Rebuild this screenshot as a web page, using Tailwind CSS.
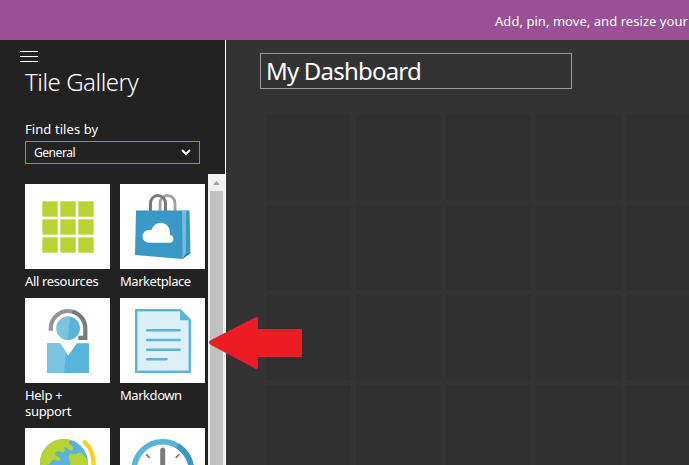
<!DOCTYPE html>
<html lang="en"><head><meta charset="utf-8"><title>Tile Gallery</title>
<script src="https://cdn.jsdelivr.net/npm/@tailwindcss/browser@4"></script></head>
<body class="relative flex h-[465px] w-[689px] flex-col overflow-hidden bg-[#333] font-['Noto_Sans','Open_Sans',sans-serif] text-white">
<header class="flex h-10 shrink-0 items-center bg-[#9b4f96] pt-[3px] pl-[495px] text-[13px] whitespace-nowrap"><span class="tracking-[0.05px]">Add, pin, move, and resize your tiles</span></header>
<div class="flex min-h-0 flex-1">
<aside class="flex w-[226px] shrink-0 flex-col border-r border-white bg-[#222]">
  <div class="h-[134px] shrink-0 pt-[11px] pl-[25px]">
    <div class="-ml-[5px] flex w-[18px] flex-col gap-1"><i class="h-px bg-white"></i><i class="h-px bg-white"></i><i class="h-px bg-white"></i></div>
    <h1 class="mt-[3px] h-[34px] text-[24px] leading-[34px] font-light tracking-[-0.45px] whitespace-nowrap">Tile Gallery</h1>
    <p class="mt-[20px] h-[20px] text-[13px] leading-[20px] tracking-[0.08px]">Find tiles by</p>
    <div class="mt-[2px] flex h-[23px] w-[175px] items-center justify-between border border-[#1bb1e7] pr-[8px] pl-2 text-[12px]"><span class="tracking-[-0.45px]">General</span>
      <svg class="h-[7px] w-[10px]" viewBox="0 0 10 7" fill="none" stroke="#fff" stroke-width="2"><path d="M1 1L5 5L9 1"/></svg></div>
  </div>
  <div class="flex min-h-0 flex-1 overflow-hidden">
    <div class="grid w-[208px] shrink-0 grid-cols-[85px_85px] content-start gap-x-[10px] pt-[10px] pl-[25px] text-[13px] leading-4">
      <div class="h-[114px]"><div class="size-[85px] bg-white"><svg viewBox="0 0 85 85" fill="#b8d432" stroke="#cfe274" stroke-width="1">
        <path d="M17.5 17.5h15v15h-15zM35.5 17.5h15v15h-15zM53.5 17.5h15v15h-15zM17.5 35.5h15v15h-15zM35.5 35.5h15v15h-15zM53.5 35.5h15v15h-15zM17.5 53.5h15v15h-15zM35.5 53.5h15v15h-15zM53.5 53.5h15v15h-15z"/></svg></div><p class="mt-[4px] whitespace-nowrap"><span class="tracking-[-0.35px]">All resources</span></p></div>
      <div class="h-[114px]"><div class="size-[85px] bg-white"><svg viewBox="0 0 85 85">
        <path d="M40 27V19a7.500 7.500 0 0 1 15 0V27" fill="none" stroke="#a0a1a2" stroke-width="2.800"/>
        <path d="M30.500 27V19a7.500 7.500 0 0 1 15 0V27" fill="none" stroke="#7a7a7a" stroke-width="3"/>
        <path d="M16 26.500H69.500L70.500 69L62.500 75L15 71Z" fill="#3999c6"/><path d="M62 26.500H66V72L62.500 75Z" fill="#7bb9d9"/><path d="M62.500 75L66 69L70.500 69Z" fill="#2b7fa8"/>
        <path d="M28.800 58.700a6.400 6.400 0 0 1 .2-12.800c.9 0 1.600.1 2.300.4C33 41.600 36.300 38.700 40.500 38.700c5.300 0 9.500 4.300 9.500 9.500 0 1-.1 2-.4 2.900 2.200 0 3.900 1.700 3.900 3.800 0 2.200-1.700 3.800-3.800 3.800z" fill="#fff"/></svg></div><p class="mt-[4px] whitespace-nowrap"><span class="tracking-[-0.45px]">Marketplace</span></p></div>
      <div class="h-[130px]"><div class="size-[85px] bg-white"><svg viewBox="0 0 85 85">
        <path d="M25.800 32.700V30.300A17.250 17.250 0 0 1 47 13.500" fill="none" stroke="#959595" stroke-width="4.200"/><path d="M47 13.500A17.250 17.250 0 0 1 60.300 30.300V39.900H53.300" fill="none" stroke="#7a7a7a" stroke-width="4.200"/>
        <circle cx="43.300" cy="30.300" r="11.700" fill="#59b4d9"/><path d="M45 18.800A11.700 11.700 0 1 0 42.500 42Z" fill="#7ac3e1"/>
        <path d="M22 45.300H35L43.300 57.500L51.700 45.300H64V75H22Z" fill="#59b4d9"/><path d="M22 45.300H35L41.200 54.500L39 75H22Z" fill="#7ac3e1"/></svg></div><p class="mt-[4px] tracking-[-0.3px]">Help + support</p></div>
      <div class="h-[130px]"><div class="size-[85px] bg-white"><svg viewBox="0 0 85 85">
        <path d="M16 12H60L70 22.500V74H16Z" fill="#ddeff7" stroke="#59b4d9" stroke-width="2"/><path d="M17.500 13.500H59M17.500 13V72.500H68.500V23" fill="none" stroke="#a5d5e9"/><path d="M60 11L71 22.300H60Z" fill="#59b4d9"/>
        <path d="M27.200 32.300H59.500M27.200 42H59.500M27.200 51.700H59.500M27.200 61.300H46.500" stroke="#59b4d9" stroke-width="2.600" stroke-linecap="round"/></svg></div><p class="mt-[4px]"><span class="tracking-[-0.45px]">Markdown</span></p></div>
      <div class="size-[85px] bg-white"><svg viewBox="0 0 85 85">
        <circle cx="39" cy="35" r="24" fill="#59b4d9"/>
        <path d="M15 35A24 24 0 0 1 40 11c2 0 4 .5 5.500 1.200c-1.500 1.300-2 2.800-1 4c.8 1 2 .8 2.800 2c2.500 3-.8 5.500-3.500 3.200c-2-1.800-3.500-2.200-5.500-2.200c2.500 2 2.200 5-.6 5.200c-2 .1-2-1.300-3.800-1.300c-2.600 0-4.400 1.800-3.400 4c.8 1.600 4 1 4.500 3.500c.4 2.400-2 2.500-3.500 1.600c-3-1.700-5-.2-7 4L15.500 38z" fill="#b8d432"/>
        <path d="M43.500 29c0-3 2.500-4 5-3c1.700.7 2.700.3 4-.7c2-1.500 4.500-.6 6 2C60 29 63 31 63 38H44.500c2-3-.7-5.500-1-9z" fill="#b8d432"/>
        <path d="M59.700 14.300Q69 22 68.700 39" fill="none" stroke="#fcd116" stroke-width="4.300" stroke-linecap="round"/></svg></div>
      <div class="size-[85px] bg-white"><svg viewBox="0 0 85 85" fill="none">
        <circle cx="42.700" cy="42.500" r="28.700" stroke="#59b4d9" stroke-width="5.500"/><path d="M57.500 17.900A28.700 28.700 0 0 1 71.400 42.500" stroke="#3999c6" stroke-width="5.500"/>
        <path d="M42.700 22V45" stroke="#7a7a7a" stroke-width="5" stroke-linecap="round"/><path d="M26.200 26.300l3.500 3.500M59.200 26.300l-3.500 3.500" stroke="#7a7a7a" stroke-width="1.800"/></svg></div>
    </div>
    <div class="flex w-[17px] shrink-0 flex-col items-center bg-[#f1f1f1]"><div class="flex h-[17px] w-full items-center justify-center"><svg class="h-1 w-[7px]" viewBox="0 0 7 4" fill="#a3a3a3"><path d="M0 4L3.500 0L7 4z"/></svg></div><div class="w-[13px] flex-1 bg-[#c1c1c1]"></div></div>
  </div>
</aside>
<main class="min-w-0 flex-1 overflow-hidden pt-[13px] pl-[34px]">
  <div class="flex h-9 w-[312px] items-center border border-[#999] pl-[5px] text-[24px]"><span class="tracking-[-0.8px]">My Dashboard</span></div>
  <div class="mt-[26px] ml-[6px] grid w-[445px] grid-cols-5 gap-[5px] *:h-[85px] *:bg-[#2f2f2f]">
    <i></i><i></i><i></i><i></i><i></i><i></i><i></i><i></i><i></i><i></i><i></i><i></i><i></i><i></i><i></i><i></i><i></i><i></i><i></i><i></i></div>
</main></div>
<svg class="absolute top-[316px] left-[208px] h-[54px] w-[95px]" viewBox="0 0 95 54" fill="#ed1c24"><path d="M1 26Q1 27.500 3 29L47 52.500Q50 54 50 51V41H93.500L94 40V14L93.500 13H50V3Q50 0 47 1.500L3 24Q1 25 1 26z"/></svg>
</body></html>
